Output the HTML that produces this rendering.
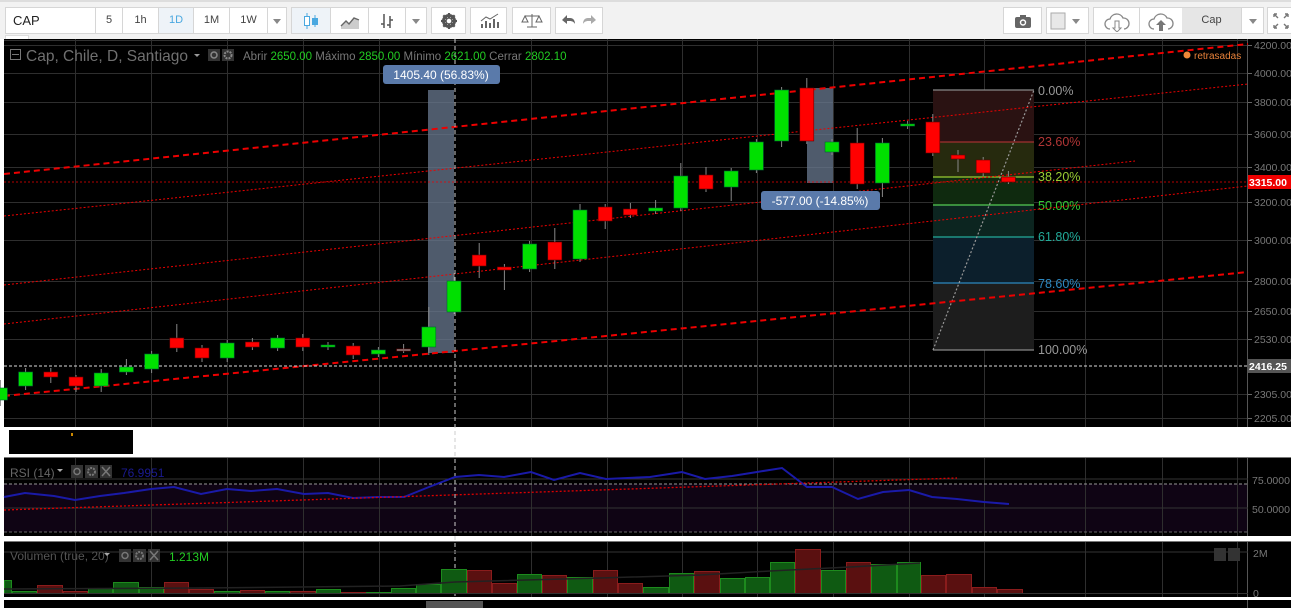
<!DOCTYPE html>
<html><head><meta charset="utf-8">
<style>
*{margin:0;padding:0;box-sizing:border-box}
body{width:1291px;height:608px;overflow:hidden;background:#fff;font-family:"Liberation Sans",sans-serif;position:relative}
#tb{position:absolute;left:0;top:0;width:1291px;height:39px;background:#f2f2f2;border-top:2px solid #ddd}
.b{position:absolute;top:5px;height:27px;background:#fff;border:1px solid #d6d6d6;font-size:11px;color:#444;text-align:center;line-height:25px}
.b svg{margin-top:4px}
.dd:after{content:"";position:absolute;left:50%;top:11px;margin-left:-4px;border:4px solid transparent;border-top:5px solid #888}
</style></head><body>
<div id="tb">
 <div class="b" style="left:5px;width:91px;text-align:left;padding-left:7px;font-size:13px;color:#222">CAP</div>
 <div class="b" style="left:95px;width:28px">5</div>
 <div class="b" style="left:122px;width:37px">1h</div>
 <div class="b" style="left:158px;width:36px;background:#eef3f8;color:#4aa8e0">1D</div>
 <div class="b" style="left:193px;width:37px">1M</div>
 <div class="b" style="left:229px;width:39px">1W</div>
 <div class="b dd" style="left:267px;width:20px"></div>
 <div class="b" style="left:291px;width:40px;background:#eef3f8"><svg width="20" height="18"><path d="M6 1v16M14 3v12" stroke="#4aa8e0"/><rect x="3.5" y="4.5" width="5" height="9" fill="#fff" stroke="#4aa8e0"/><rect x="11.5" y="6.5" width="5" height="6" fill="#4aa8e0" stroke="#4aa8e0"/></svg></div>
 <div class="b" style="left:330px;width:39px"><svg width="22" height="18"><path d="M2 14l5-5 3 3 5-6 5 3v8H2z" fill="#ccc"/><path d="M2 14l5-5 3 3 5-6 5 2" stroke="#666" fill="none" stroke-width="1.4"/></svg></div>
 <div class="b" style="left:368px;width:38px"><svg width="20" height="18"><path d="M7 2v14M4 12h3M13 4v12M13 8h3M13 13h-3" stroke="#555" stroke-width="1.5" fill="none"/></svg></div>
 <div class="b dd" style="left:405px;width:22px"></div>
 <div class="b" style="left:431px;width:35px"><svg width="18" height="18"><circle cx="9" cy="9" r="5.5" fill="none" stroke="#555" stroke-width="3"/><path d="M9 1v16M1 9h16M3.3 3.3l11.4 11.4M14.7 3.3L3.3 14.7" stroke="#555" stroke-width="2.2"/><circle cx="9" cy="9" r="2.3" fill="#fff"/></svg></div>
 <div class="b" style="left:470px;width:37px"><svg width="22" height="18"><path d="M4 16v-4M8 16v-7M12 16v-5M16 16v-9M20 16v-6" stroke="#666" stroke-width="2"/><path d="M3 9l5-4 4 2 8-5" stroke="#666" fill="none"/></svg></div>
 <div class="b" style="left:512px;width:39px"><svg width="22" height="18"><path d="M11 2v13M4 4h14M6 15h10M4 4l-3 6h6zM18 4l-3 6h6z" stroke="#666" fill="none"/></svg></div>
 <div class="b" style="left:555px;width:48px"><svg width="40" height="18"><path d="M3 8l5-5v3h3c3 0 5 2 5 6-1-2-3-3-5-3H8v3z" fill="#666"/><path d="M37 8l-5-5v3h-3c-3 0-5 2-5 6 1-2 3-3 5-3h3v3z" fill="#aaa"/></svg></div>

 <div class="b" style="left:1003px;width:39px"><svg width="20" height="18"><rect x="2" y="5" width="16" height="11" rx="2" fill="#666"/><rect x="7" y="3" width="6" height="3" fill="#666"/><circle cx="10" cy="10.5" r="3.2" fill="#fff"/><circle cx="10" cy="10.5" r="1.8" fill="#666"/></svg></div>
 <div class="b" style="left:1046px;width:43px"><svg width="38" height="18"><rect x="2" y="1" width="14" height="16" fill="#e8e8e8" stroke="#aaa"/><path d="M23 7h8l-4 5z" fill="#888"/></svg></div>
 <div class="b" style="left:1093px;width:47px"><svg width="28" height="20"><path d="M7 17a5 5 0 0 1 0-10 7 7 0 0 1 13-1 5 5 0 0 1 1 11" fill="none" stroke="#888" stroke-width="1.3"/><path d="M12 9v7h-2l4 4 4-4h-2V9z" fill="#fff" stroke="#888"/></svg></div>
 <div class="b" style="left:1139px;width:44px"><svg width="28" height="20"><path d="M7 17a5 5 0 0 1 0-10 7 7 0 0 1 13-1 5 5 0 0 1 1 11" fill="none" stroke="#888" stroke-width="1.3"/><path d="M12 19v-6h-3l5-5 5 5h-3v6z" fill="#777"/></svg></div>
 <div class="b" style="left:1182px;width:60px;background:#e6e6e6;border-left:none">Cap</div>
 <div class="b dd" style="left:1241px;width:23px"></div>
 <div class="b" style="left:1267px;width:30px"><svg width="20" height="18"><path d="M2 2l4 4M2 2h3M2 2v3M16 2l-4 4M16 2h-3M16 2v3M2 16l4-4M2 16h3M2 16v-3M16 16l-4-4M16 16h-3M16 16v-3" stroke="#777" stroke-width="1.4"/></svg></div>
 <div style="position:absolute;left:5px;top:33px;width:24px;height:6px;background:#fff;border:1px solid #ddd;border-bottom:none"></div>
</div>

<svg id="ch" width="1291" height="608" style="position:absolute;left:0;top:0" xmlns="http://www.w3.org/2000/svg" font-family="Liberation Sans, sans-serif">
 <rect x="4" y="39" width="1287" height="388" fill="#000"/>
 <rect x="4" y="458" width="1287" height="78" fill="#000"/>
 <rect x="4" y="542" width="1287" height="55" fill="#000"/>
 <rect x="4" y="600" width="1287" height="8" fill="#000"/>
 <rect x="9" y="430" width="124" height="24" fill="#000"/>
 <rect x="71" y="433" width="2" height="3" fill="#c80"/>
 <line x1="4" y1="457.5" x2="1291" y2="457.5" stroke="#777"/>
 <line x1="4" y1="541.5" x2="1291" y2="541.5" stroke="#777"/>
 <line x1="4" y1="40.5" x2="1248" y2="40.5" stroke="#333"/>
 <rect x="4" y="484" width="1244" height="48" fill="#0f0414"/>
 <g id="grid"></g>
 <g stroke="#555">
 <line x1="1247.5" y1="39" x2="1247.5" y2="427"/>
 <line x1="1247.5" y1="458" x2="1247.5" y2="536"/>
 <line x1="1247.5" y1="542" x2="1247.5" y2="597"/>
 <line x1="1247.5" y1="600" x2="1247.5" y2="608"/>
 </g>
 <g id="pl" font-size="10.5" fill="#777"></g>

 <rect x="428" y="90" width="26" height="263" fill="#6a7a90" opacity="0.75"/>
 <rect x="807" y="88" width="26" height="95" fill="#6a7a90" opacity="0.75"/>

 <rect x="933" y="90" width="101" height="52" fill="#2a1212"/>
 <rect x="933" y="142" width="101" height="35" fill="#262a0e"/>
 <rect x="933" y="177" width="101" height="28" fill="#0f2a0f"/>
 <rect x="933" y="205" width="101" height="32" fill="#0c2520"/>
 <rect x="933" y="237" width="101" height="46" fill="#0c1f2c"/>
 <rect x="933" y="283" width="101" height="67" fill="#1d1d1d"/>
 <g stroke-width="1.2">
 <line x1="933" y1="90" x2="1034" y2="90" stroke="#888"/>
 <line x1="933" y1="142" x2="1034" y2="142" stroke="#a03030"/>
 <line x1="933" y1="177" x2="1034" y2="177" stroke="#9c3"/>
 <line x1="933" y1="205" x2="1034" y2="205" stroke="#5c5"/>
 <line x1="933" y1="237" x2="1034" y2="237" stroke="#2a9"/>
 <line x1="933" y1="283" x2="1034" y2="283" stroke="#2d88c0"/>
 <line x1="933" y1="350" x2="1034" y2="350" stroke="#888"/>
 <line x1="933" y1="350" x2="1034" y2="90" stroke="#999" stroke-dasharray="2,2"/>
 </g>
 <g font-size="12.5">
 <text x="1038" y="95" fill="#999">0.00%</text>
 <text x="1038" y="146" fill="#b03535">23.60%</text>
 <text x="1038" y="181" fill="#9c3">38.20%</text>
 <text x="1038" y="210" fill="#3c3">50.00%</text>
 <text x="1038" y="241" fill="#2a9">61.80%</text>
 <text x="1038" y="288" fill="#2d88c0">78.60%</text>
 <text x="1038" y="354" fill="#999">100.00%</text>
 </g>

 <g stroke="#e00" fill="none">
 <line x1="4" y1="174" x2="1248" y2="44" stroke-width="2" stroke-dasharray="6,4"/>
 <line x1="4" y1="396" x2="1248" y2="272" stroke-width="2" stroke-dasharray="6,4"/>
 <line x1="4" y1="216" x2="1248" y2="84" stroke-dasharray="2,2"/>
 <line x1="4" y1="285" x2="1135" y2="161" stroke-dasharray="2,2"/>
 <line x1="4" y1="324" x2="1248" y2="186" stroke-dasharray="2,2"/>
 <line x1="4" y1="182" x2="1248" y2="182" stroke-dasharray="2,2" stroke-width="0.8"/>
 </g>
 <line x1="4" y1="366" x2="1248" y2="366" stroke="#ddd" stroke-dasharray="3,2"/>
 <line x1="455" y1="39" x2="455" y2="600" stroke="#ccc" stroke-dasharray="4,3"/>

 <g id="cd"></g>

 <rect x="383" y="65" width="117" height="19" rx="3" fill="#5a7aaa"/>
 <text x="441" y="79" fill="#fff" font-size="12" text-anchor="middle">1405.40 (56.83%)</text>
 <rect x="761" y="191" width="119" height="19" rx="3" fill="#5a7aaa"/>
 <text x="820" y="205" fill="#fff" font-size="12" text-anchor="middle">-577.00 (-14.85%)</text>

 <rect x="10.5" y="49.5" width="10" height="10" fill="none" stroke="#777"/><line x1="12" y1="54.5" x2="19" y2="54.5" stroke="#777"/>
 <text x="26" y="61" font-size="16" fill="#707070" textLength="162" lengthAdjust="spacingAndGlyphs">Cap, Chile, D, Santiago</text>
 <path d="M194 54h6l-3 3z" fill="#999"/>
 <rect x="208" y="49" width="12" height="12" fill="#333"/><circle cx="214" cy="55" r="3" fill="none" stroke="#888" stroke-width="1.5"/>
 <rect x="222" y="49" width="12" height="12" fill="#333"/><circle cx="228" cy="55" r="3.5" fill="none" stroke="#888" stroke-width="2" stroke-dasharray="2,1"/>
 <text x="243" y="60" font-size="11.5" fill="#777">Abrir <tspan fill="#2c2">2650.00</tspan> Máximo <tspan fill="#2c2">2850.00</tspan> Mínimo <tspan fill="#2c2">2621.00</tspan> Cerrar <tspan fill="#2c2">2802.10</tspan></text>
 <circle cx="1187" cy="55" r="3.5" fill="#f08838"/>
 <text x="1194" y="59" font-size="10" fill="#e8823a">retrasadas</text>

 <rect x="1248" y="175" width="43" height="14" fill="#e00"/>
 <text x="1287" y="186" font-size="10.5" fill="#fff" text-anchor="end" font-weight="bold">3315.00</text>
 <rect x="1248" y="359" width="43" height="14" fill="#555"/>
 <text x="1287" y="370" font-size="10.5" fill="#fff" text-anchor="end" font-weight="bold">2416.25</text>

 <line x1="4" y1="479" x2="1248" y2="479" stroke="#333"/>
 <line x1="4" y1="508" x2="1248" y2="508" stroke="#333"/>
 <line x1="4" y1="484" x2="1248" y2="484" stroke="#999" stroke-dasharray="3,2"/>
 <line x1="4" y1="532" x2="1248" y2="532" stroke="#666" stroke-dasharray="3,2"/>
 <polyline fill="none" stroke="#1a1aa8" stroke-width="2" points="4,497 25,493 54,496 75,500 100,496 124,493 151,489 174,487 201,494 227,489 251,491 277,489 304,494 328,493 353,498 378,497 404,497 429,487 455,477 479,475 504,477 531,472 554,480 580,473 606,479 650,477 682,472 705,479 732,476 757,472 782,468 807,487 832,487 858,499 883,492 909,490 932,497 957,499 984,502 1009,504"/>
 <line x1="4" y1="510" x2="957" y2="478" stroke="#d00" stroke-dasharray="2,2" stroke-width="1.3"/>
 <text x="10" y="477" font-size="12" fill="#666">RSI (14)</text>
 <path d="M57 469h6l-3 3z" fill="#aaa"/>
 <rect x="71" y="465" width="12" height="13" fill="#333"/><circle cx="77" cy="471.5" r="3" fill="none" stroke="#777" stroke-width="1.5"/>
 <rect x="85" y="465" width="13" height="13" fill="#333"/><circle cx="91.5" cy="471.5" r="3.5" fill="none" stroke="#777" stroke-width="2" stroke-dasharray="2,1"/>
 <rect x="100" y="465" width="12" height="13" fill="#333"/><path d="M102 467l8 9M110 467l-8 9" stroke="#777" stroke-width="1.5"/>
 <text x="121" y="477" font-size="12" fill="#1a1a90">76.9951</text>
 <text x="1252" y="484" font-size="10.5" fill="#777">75.0000</text>
 <text x="1252" y="513" font-size="10.5" fill="#777">50.0000</text>

 <line x1="4" y1="552" x2="1248" y2="552" stroke="#333"/>
 <g id="vol"></g>
 <line x1="4" y1="593.5" x2="1248" y2="593.5" stroke="#333"/>
 <polyline fill="none" stroke="#222" stroke-width="1.5" points="4,589 200,588 400,586 455,582 600,578 700,575 770,571 850,567 920,563"/>
 <text x="10" y="560" font-size="12" fill="#555">Volumen (true, 20)</text>
 <path d="M104 553h6l-3 3z" fill="#aaa"/>
 <rect x="119" y="549" width="12" height="13" fill="#333"/><circle cx="125" cy="555.5" r="3" fill="none" stroke="#777" stroke-width="1.5"/>
 <rect x="133" y="549" width="13" height="13" fill="#333"/><circle cx="139.5" cy="555.5" r="3.5" fill="none" stroke="#777" stroke-width="2" stroke-dasharray="2,1"/>
 <rect x="148" y="549" width="12" height="13" fill="#333"/><path d="M150 551l8 9M158 551l-8 9" stroke="#777" stroke-width="1.5"/>
 <text x="169" y="561" font-size="12" fill="#2c2">1.213M</text>
 <rect x="1214" y="548" width="12" height="13" fill="#333"/><rect x="1228" y="548" width="12" height="13" fill="#333"/>
 <text x="1253" y="557" font-size="10.5" fill="#777">2M</text>
 <text x="1253" y="597" font-size="10.5" fill="#777">0</text>
 <rect x="4" y="597" width="1287" height="3" fill="#fff"/>
 <rect x="426" y="601" width="57" height="7" fill="#555"/>
</svg>
<script>
var NS="http://www.w3.org/2000/svg";
function el(p,t,a){var e=document.createElementNS(NS,t);for(var k in a)e.setAttribute(k,a[k]);p.appendChild(e);return e;}
var g=document.getElementById("grid");
var vx=[75,151,227,303,379,531,607,682,757,833,909,984,1085,1162,1237];
vx.forEach(function(x){[[39,427],[458,536],[542,597]].forEach(function(r){el(g,"line",{x1:x+.5,y1:r[0],x2:x+.5,y2:r[1],stroke:"#2e2e2e"});});});
var hy=[[45,"4200.00"],[73,"4000.00"],[102,"3800.00"],[134,"3600.00"],[167,"3400.00"],[202,"3200.00"],[240,"3000.00"],[281,"2800.00"],[311,"2650.00"],[339,"2530.00"],[394,"2305.00"],[418,"2205.00"]];
var pl=document.getElementById("pl");
hy.forEach(function(h){el(g,"line",{x1:4,y1:h[0]+.5,x2:1248,y2:h[0]+.5,stroke:"#2e2e2e"});el(g,"line",{x1:1248,y1:h[0]+.5,x2:1252,y2:h[0]+.5,stroke:"#666"});var t=el(pl,"text",{x:1254,y:h[0]+4});t.textContent=h[1];});
var C=[[388,400,1],[372,386,1],[372,377,0],[377,386,0],[373,386,1],[367,372,1],[354,369,1],[338,348,0],[348,358,0],[343,358,1],[342,347,0],[338,348,1],[338,347,0],[345,347,1],[346,355,0],[350,354,1],[349,350,2],[327,347,1],[281,312,1],[255,266,0],[267,270,0],[244,269,1],[242,260,0],[210,259,1],[207,221,0],[209,215,0],[208,211,1],[176,208,1],[175,189,0],[171,187,1],[142,170,1],[90,141,1],[88,141,0],[142,152,1],[143,184,0],[143,183,1],[124,126,1],[122,153,0],[155,159,0],[160,173,0],[177,182,0]];
var W=[[8,6],[4,4],[4,6],[2,6],[4,6],[8,3],[3,4],[14,4],[3,4],[3,4],[4,3],[3,3],[4,4],[3,3],[3,4],[3,3],[5,3],[20,8],[8,2],[12,12],[3,20],[3,3],[14,9],[6,3],[3,8],[6,3],[8,3],[13,3],[8,3],[3,14],[3,3],[3,6],[10,3],[3,3],[15,5],[5,14],[3,3],[8,3],[5,13],[3,3],[6,2]];
var cd=document.getElementById("cd");
C.forEach(function(c,i){var x=454+25.2*(i-18);var w=W[i];
el(cd,"line",{x1:x,y1:c[0]-w[0],x2:x,y2:c[1]+w[1],stroke:"#888"});
var col=c[2]==1?"#00e000":c[2]==0?"#ff0000":"#888";
el(cd,"rect",{x:x-7,y:c[0],width:14,height:Math.max(2,c[1]-c[0]),fill:col,stroke:c[2]==1?"#063":"#600","stroke-width":0.6});});
var V=[[4,12,580,1],[12,37,591,1],[37,63,585,0],[63,88,591,0],[88,113,588,1],[113,139,582,1],[139,164,587,1],[164,189,582,0],[189,214,589,0],[214,240,591,1],[240,265,590,0],[265,290,591,1],[290,316,591,0],[316,341,589,1],[341,366,592,0],[366,391,592,1],[391,416,588,1],[416,441,584,1],[441,467,569,1],[467,492,570,0],[492,517,583,0],[517,542,574,1],[542,567,575,0],[567,593,577,1],[593,618,570,0],[618,643,583,0],[643,669,587,1],[669,694,573,1],[694,720,571,0],[720,745,578,1],[745,770,577,1],[770,795,562,1],[795,821,549,0],[821,846,570,1],[846,871,562,0],[871,897,564,1],[897,921,562,1],[921,946,575,0],[946,972,574,0],[972,997,587,0],[997,1023,589,0]];
var vg=document.getElementById("vol");
V.forEach(function(v){el(vg,"rect",{x:v[0]+.5,y:v[2]+.5,width:v[1]-v[0]-1,height:593-v[2],fill:v[3]?"#0f5a12":"#5a1010",stroke:v[3]?"#1d8a1d":"#8a1c1c"});});
</script>
</body></html>
